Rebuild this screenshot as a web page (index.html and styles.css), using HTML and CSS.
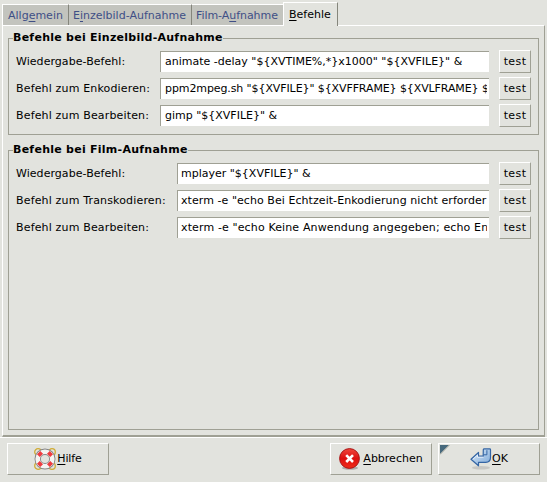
FILE: index.html
```
<!DOCTYPE html>
<html lang="de">
<head>
<meta charset="utf-8">
<title>Befehle</title>
<link rel="stylesheet" href="styles.css">
</head>
<body>
<nav class="tabs">
  <div class="tab t1"><span>Allg<u>e</u>mein</span></div>
  <div class="tab t2"><span>E<u>i</u>nzelbild-Aufnahme</span></div>
  <div class="tab t3"><span>Film-A<u>u</u>fnahme</span></div>
  <div class="tab active"><span><u>B</u>efehle</span></div>
</nav>
<main class="panel">
  <section class="group single">
    <h2><span>Befehle bei Einzelbild-Aufnahme</span></h2>
    <div class="row"><label>Wiedergabe-Befehl:</label><div class="field"><span>animate -delay "${XVTIME%,*}x1000" "${XVFILE}" &amp;</span></div><button class="test">test</button></div>
    <div class="row"><label class="wide">Befehl zum Enkodieren:</label><div class="field"><span class="ppm">ppm2mpeg.sh "${XVFILE}" ${XVFFRAME} ${XVLFRAME} $</span></div><button class="test">test</button></div>
    <div class="row"><label class="wide">Befehl zum Bearbeiten:</label><div class="field"><span>gimp "${XVFILE}" &amp;</span></div><button class="test">test</button></div>
  </section>
  <section class="group film">
    <h2><span>Befehle bei Film-Aufnahme</span></h2>
    <div class="row"><label>Wiedergabe-Befehl:</label><div class="field"><span>mplayer "${XVFILE}" &amp;</span></div><button class="test">test</button></div>
    <div class="row"><label class="wide">Befehl zum Transkodieren:</label><div class="field"><span class="trans">xterm -e "echo Bei Echtzeit-Enkodierung nicht erforder</span></div><button class="test">test</button></div>
    <div class="row"><label class="wide">Befehl zum Bearbeiten:</label><div class="field"><span class="edit">xterm -e "echo Keine Anwendung angegeben; echo En</span></div><button class="test">test</button></div>
  </section>
</main>
<footer class="actions">
  <button class="action help">
    <svg width="22" height="22" viewBox="0 0 22 22">
      <g fill="none" stroke="#d0ac35" stroke-width="1.3"><circle cx="4" cy="4" r="3.3"/><circle cx="18" cy="4" r="3.3"/><circle cx="4" cy="18" r="3.3"/><circle cx="18" cy="18" r="3.3"/></g>
      <circle cx="11" cy="11" r="7.3" fill="none" stroke="#858585" stroke-width="6.4"/>
      <circle cx="11" cy="11" r="7.3" fill="none" stroke="#f4f4f2" stroke-width="4.6"/>
      <path d="M7.4 7.4L4.6 4.6M14.6 7.4l2.8-2.8M7.4 14.6l-2.8 2.8M14.6 14.6l2.8 2.8" stroke="#ef3b40" stroke-width="4.6"/>
    </svg>
    <span><u>H</u>ilfe</span>
  </button>
  <button class="action cancel">
    <svg width="22" height="22" viewBox="0 0 22 22">
      <defs><linearGradient id="red" x2="0" y2="1"><stop stop-color="#f0463c"/><stop offset=".5" stop-color="#dc1010"/><stop offset="1" stop-color="#f02c18"/></linearGradient></defs>
      <ellipse cx="11" cy="20" rx="8" ry="1.8" fill="#777" opacity=".5"/>
      <circle cx="10.5" cy="10.5" r="9.9" fill="url(#red)" stroke="#a81414"/>
      <path d="M7.2 7.2l6.8 6.8M14 7.2l-6.8 6.8" stroke="#fff" stroke-width="2.6"/>
    </svg>
    <span><u>A</u>bbrechen</span>
  </button>
  <button class="action ok">
    <svg class="corner" width="10" height="10" viewBox="0 0 10 10"><path d="M0 0h9L0 9z" fill="#47697c"/><path d="M9.5 0L0 9.5" stroke="#a6a79c" stroke-width="1"/></svg>
    <svg width="22" height="22" viewBox="0 0 22 22">
      <defs><linearGradient id="blue" x2="1" y2="1"><stop stop-color="#d9e9f8"/><stop offset="1" stop-color="#7ea9d8"/></linearGradient></defs>
      <ellipse cx="11" cy="19.7" rx="9" ry="1.7" fill="#888" opacity=".3"/>
      <path d="M1 11.3L8.5 4.5v3.7h4.7V7l.1-5.4Q13.4.9 14.3.9h5.4q.8 0 .8.8v7.7q0 4.6-4.8 5H8.5v3.4z" fill="url(#blue)" stroke="#3465a4" stroke-width="1.2" stroke-linejoin="round"/>
      <path d="M13.4 6.8h3.5V2.2" fill="none" stroke="#3465a4"/>
      <path d="M2.8 11.3l4.7-4.2v2.1h6" fill="none" stroke="#f4f9fe" stroke-width=".8"/>
    </svg>
    <span><u>O</u>K</span>
  </button>
</footer>
</body>
</html>
```
FILE: styles.css
```
* { box-sizing: border-box; }
body {
  margin: 0;
  padding: 2px;
  width: 547px;
  height: 482px;
  overflow: hidden;
  background: #e2e3de;
  color: #000;
  font: 11px/14px "DejaVu Sans", sans-serif;
  white-space: nowrap;
}
u { text-decoration: underline; text-underline-offset: 2px; text-decoration-thickness: 1px; text-decoration-skip-ink: none; }
button { font: inherit; color: inherit; margin: 0; padding: 0; border: 1px solid; border-color: #fff #9fa094 #9fa094 #fff; background: #e2e3de; }
.tabs { display: flex; align-items: flex-end; height: 23px; }
.tab {
  height: 21px;
  padding: 4px 0 0 5px;
  background: #c3c4be;
  border-top: 1px solid #fff;
  border-right: 1px solid #85867c;
  color: #3f4f86;
}
.t1 { width: 67px; border-left: 1px solid #fff; }
.t2 { width: 123px; padding-left: 4px; }
.t3 { width: 91px; border-right: 0; padding-left: 4px; letter-spacing: -.06px; }
.tab.active {
  width: 55px;
  height: 24px;
  margin-bottom: -1px;
  padding-top: 5px;
  background: #e2e3de;
  border-left: 1px solid #fff;
  color: #000;
}
.panel {
  width: 543px;
  height: 412px;
  padding: 12px 6px 6px 5px;
  border: solid;
  border-width: 1px 1px 2px 1px;
  border-color: #fff #9fa094 #9fa094 #fff;
}
.group { width: 531px; border: 1px solid #9fa094; padding: 0 7px; }
.single { height: 97px; }
.film { height: 280px; margin-top: 15px; }
h2 { margin: -8px 0 5px -3px; height: 14px; font-size: 11px; line-height: 14px; letter-spacing: .26px; }
h2 span { background: #e2e3de; }
.row { display: flex; height: 23px; margin-bottom: 4px; align-items: center; }
.row label { width: 144px; letter-spacing: .05px; }
.row .wide { letter-spacing: .16px; }
.film label { width: 161px; }
.field {
  flex: 1;
  height: 21px;
  margin-right: 10px;
  padding: 3px 0 0 4px;
  background: #fff;
  border: solid #9fa094;
  border-width: 1px 0 0 1px;
  overflow: hidden;
}
.film .field { padding-left: 3px; }
.field span { display: block; overflow: hidden; margin-right: 2px; }
.ppm { letter-spacing: -.1px; }
.trans { letter-spacing: .06px; }
.edit { letter-spacing: .13px; }
.test { width: 32px; height: 23px; letter-spacing: .4px; }
.actions { display: flex; margin: 0 -2px; border-top: 1px solid #fff; padding: 5px 7px; }
.action { position: relative; width: 102px; height: 32px; display: flex; align-items: center; justify-content: center; gap: 2px; }
.help { gap: 1px; letter-spacing: -.1px; }
.cancel { margin-left: 221px; }
.ok { margin-left: 6px; gap: 0; }
.corner { position: absolute; left: 1px; top: 1px; }
```
